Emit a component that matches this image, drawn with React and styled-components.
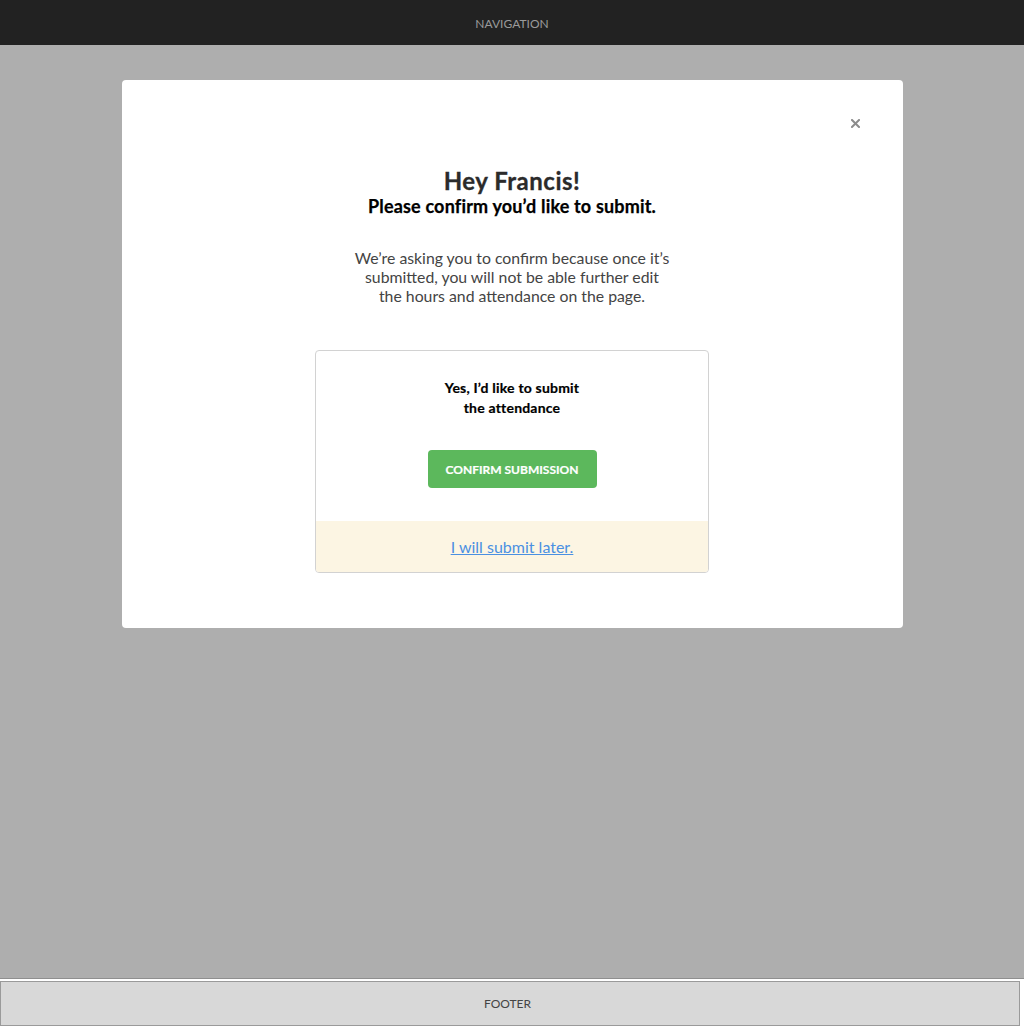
import React from 'react';
import styled, { createGlobalStyle } from 'styled-components';

const GlobalStyle = createGlobalStyle`
  html, body {
    margin: 0;
    padding: 0;
    background: #fff;
    font-family: Lato, 'Open Sans', sans-serif;
  }
  * { box-sizing: border-box; }
`;

const Nav = styled.header`
  height: 45px;
  background: #222222;
  color: #9a9a9a;
  font-size: 12px;
  display: flex;
  align-items: center;
  justify-content: center;
  padding-top: 1px;
`;

const Backdrop = styled.main`
  height: 934px;
  background: #aeaeae;
  border-bottom: 1px solid #8f8f8f;
  padding-top: 35px;
  display: flex;
  justify-content: center;
  align-items: flex-start;
`;

const Modal = styled.section`
  position: relative;
  width: 781px;
  height: 548px;
  background: #fff;
  border-radius: 4px;
  display: flex;
  flex-direction: column;
  align-items: center;
  padding-top: 87px;
`;

const CloseButton = styled.button`
  position: absolute;
  top: 36px;
  right: 40px;
  width: 14px;
  height: 14px;
  padding: 0;
  border: 0;
  background: none;
  display: flex;
  align-items: center;
  justify-content: center;
  cursor: pointer;
`;

const Title = styled.h1`
  margin: 0;
  font-size: 24px;
  line-height: 28px;
  font-weight: 700;
  letter-spacing: 0.5px;
  -webkit-text-stroke: 0.3px #2b2b2b;
  color: #2b2b2b;
`;

const Subtitle = styled.h2`
  margin: 0 0 -1px;
  font-size: 18px;
  line-height: 22px;
  font-weight: 700;
  letter-spacing: 0.17px;
  -webkit-text-stroke: 0.25px #000;
  color: #000;
`;

const Description = styled.p`
  margin: 32px 0 0;
  width: 316px;
  text-align: center;
  font-size: 15.8px;
  line-height: 19px;
  color: #444;
`;

const Card = styled.div`
  margin-top: 45px;
  width: 394px;
  border: 1px solid #d2d2d2;
  border-radius: 4px;
  overflow: hidden;
`;

const CardBody = styled.div`
  padding: 27px 0 33px;
  display: flex;
  flex-direction: column;
  align-items: center;
`;

const CardText = styled.div`
  font-size: 14px;
  line-height: 20px;
  font-weight: 700;
  letter-spacing: 0.2px;
  -webkit-text-stroke: 0.2px #000;
  color: #000;
  text-align: center;
`;

const ConfirmButton = styled.button`
  margin-top: 32px;
  width: 169px;
  height: 38px;
  border: 0;
  border-radius: 4px;
  background: #5cb85c;
  color: #fff;
  font-family: Lato, sans-serif;
  font-size: 12px;
  font-weight: 700;
  -webkit-text-stroke: 0.2px #fff;
  text-transform: uppercase;
  cursor: pointer;
`;

const CardFooter = styled.div`
  height: 51px;
  background: #fcf5e3;
  display: flex;
  align-items: center;
  justify-content: center;
`;

const LaterLink = styled.a`
  font-size: 16px;
  color: #4a90e2;
  text-decoration: underline;
  cursor: pointer;
`;

const Footer = styled.footer`
  margin-top: 2px;
  width: 1020px;
  height: 45px;
  background: #d8d8d8;
  border: 1px solid #9a9a9a;
  color: #444;
  font-size: 12px;
  display: flex;
  align-items: center;
  justify-content: center;
  padding-right: 5px;
`;

const CloseIcon = () => (
  <svg width="9" height="9" viewBox="0 0 9 9">
    <path d="M1 1L8 8M8 1L1 8" stroke="#8c8c8c" strokeWidth="2" strokeLinecap="square" />
  </svg>
);

const App = () => {
  return (
    <>
      <GlobalStyle />
      <Nav>NAVIGATION</Nav>
      <Backdrop>
        <Modal>
          <CloseButton aria-label='Close'>
            <CloseIcon />
          </CloseButton>
          <Title>Hey Francis!</Title>
          <Subtitle>Please confirm you’d like to submit.</Subtitle>
          <Description>
            We’re asking you to confirm because once it’s submitted, you will
            not be able further edit the hours and attendance on the page.
          </Description>
          <Card>
            <CardBody>
              <CardText>
                Yes, I’d like to submit
                <br />
                the attendance
              </CardText>
              <ConfirmButton>Confirm submission</ConfirmButton>
            </CardBody>
            <CardFooter>
              <LaterLink>I will submit later.</LaterLink>
            </CardFooter>
          </Card>
        </Modal>
      </Backdrop>
      <Footer>FOOTER</Footer>
    </>
  );
};

export default App;
